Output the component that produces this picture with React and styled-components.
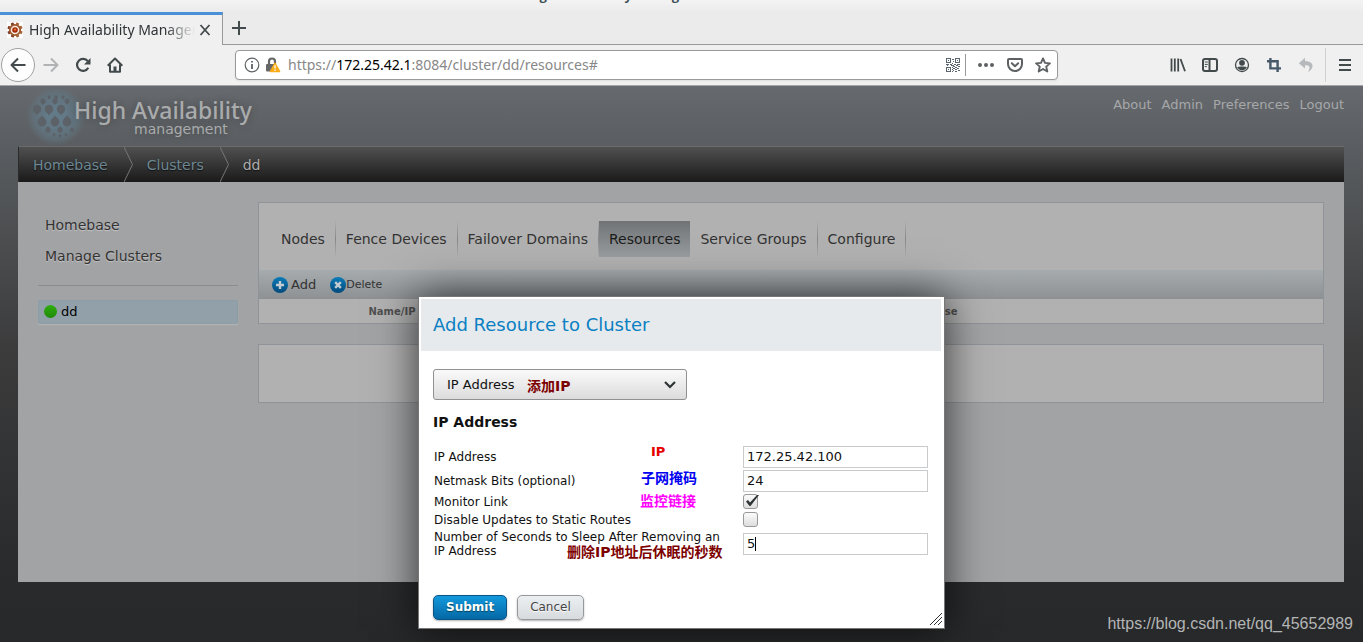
import React from "react";
import styled, { createGlobalStyle } from "styled-components";

const GlobalStyle = createGlobalStyle`
	* {
		box-sizing: border-box;
	}

	body {
		margin: 0;
		font-family: "DejaVu Sans", Verdana, "Noto Sans CJK SC", sans-serif;
		font-size: 13px;
		color: #111;
	}

	button, input, select {
		font-family: inherit;
		font-size: 13px;
	}

	a {
		color: inherit;
		text-decoration: none;
	}
`;

const Window = styled.div`
	min-height: 100vh;
	display: flex;
	flex-direction: column;
`;

/* browser */

const TitleBar = styled.div`
	height: 12px;
	padding: 0 10px 8px 0;
	display: flex;
	align-items: flex-end;
	justify-content: center;
	overflow: hidden;
	background: linear-gradient(#f3f3f3, #ebebeb);
	color: #3f5159;
	font: bold 13px/18px "Open Sans", sans-serif;
	white-space: nowrap;
`;

const TabStrip = styled.div`
	display: flex;
	height: 33px;
	background: #ebebeb;
`;

const BrowserTab = styled.div`
	display: flex;
	align-items: center;
	width: 223px;
	padding: 0 9px 0 7px;
	background: #f0f0f0;
	border-top: 3px solid #4a90d9;
	border-right: 1px solid #999;
	font: 14px/20px "Noto Sans", sans-serif;
	color: #2e3436;
`;

const TabTitle = styled.span`
	flex: 1;
	min-width: 0;
	margin: 0 2px 0 6px;
	overflow: hidden;
	white-space: nowrap;
	mask-image: linear-gradient(to right, #000 82%, transparent);
`;

const StripRest = styled.div`
	flex: 1;
	display: flex;
	align-items: center;
	padding-left: 8px;
	border-bottom: 1px solid #999;
`;

const IconButton = styled.button`
	display: flex;
	align-items: center;
	justify-content: center;
	width: 16px;
	height: 16px;
	padding: 0;
	border: 0;
	background: none;
	color: ${props => props.$faded ? "#b0b2b3" : "#434a4c"};
`;

const Toolbar = styled.div`
	display: flex;
	align-items: center;
	height: 41px;
	padding: 0 10px 0 1px;
	background: #f0f0f0;
	border-bottom: 1px solid #a5a5a5;
`;

const ToolGroup = styled.div`
	display: flex;
	align-items: center;
	gap: 16px;
`;

const MenuGroup = styled(ToolGroup)`
	gap: 11px;
	margin-left: 11px;
`;

const BackButton = styled(IconButton)`
	width: 34px;
	height: 34px;
	margin-right: -8px;
	border: 1px solid #a0a0a0;
	border-radius: 50%;
	background: #fdfdfd;
`;

const UrlBar = styled.div`
	flex: 1;
	display: flex;
	align-items: center;
	gap: 5px;
	height: 30px;
	margin: 0 112px;
	padding: 0 6px 0 8px;
	background: white;
	border: 1px solid #999;
	border-radius: 4px;
	box-shadow: 0 1px 2px rgba(0,0,0,0.08);
	color: #5d6163;
`;

const Url = styled.div`
	flex: 1;
	margin-left: 2px;
	color: #888;
	font: 14px/20px "Noto Sans", sans-serif;

	b {
		font-weight: normal;
		color: #000;
	}
`;

const Divider = styled.span`
	width: 1px;
	height: ${props => props.$height}px;
	background: ${props => props.$color};
`;

const UrlActions = styled.div`
	display: flex;
	align-items: center;
	gap: 12px;
	margin-left: 6px;
`;

/* page */

const Page = styled.div`
	position: relative;
	flex: 1;
	padding: 0 19px 60px 18px;
	background: linear-gradient(#66696d, #55585b 90px, #3c3c3d 260px, #2a2b2c 480px, #272829);
`;

const Header = styled.header`
	display: flex;
	justify-content: space-between;
	height: 60px;
`;

const Brand = styled.div`
	display: flex;
	margin-left: 5px;
`;

const BrandText = styled.div`
	display: flex;
	flex-direction: column;
	align-items: flex-end;
	padding-top: 11px;
	margin-left: -14px;
	color: #a9abac;
	text-shadow: 0 0 8px rgba(0,0,0,0.3);
`;

const BrandName = styled.span`
	font: 500 23px/26px "Noto Sans", sans-serif;
`;

const BrandSub = styled.span`
	margin-right: 24px;
	font-size: 14px;
	line-height: 12px;
`;

const UserNav = styled.nav`
	display: flex;
	gap: 10px;
	padding-top: 11px;
	line-height: 16px;
	color: #a6a8aa;
`;

const Breadcrumbs = styled.nav`
	display: flex;
	align-items: center;
	height: 36px;
	padding-left: 14px;
	background: linear-gradient(#505050, #1a1a1a);
	border-top: 1px solid #6a6b6c;
	border-left: 1px solid #2b2b2b;
	font-size: 14px;
	color: #6d8894;
	text-shadow: 0 1px 1px #111;

	svg {
		margin: 0 14px 0 16px;
	}
`;

const Current = styled.span`
	color: #adadad;
`;

const Main = styled.main`
	display: flex;
	gap: 20px;
	min-height: 400px;
	padding: 20px;
	background: #a2a3a5;
`;

const Sidebar = styled.aside`
	width: 200px;
	padding-top: 8px;
`;

const SideLink = styled.a`
	display: block;
	padding: 0 7px;
	font-size: 14px;
	line-height: 31px;
	color: #333;
	text-shadow: 0 1px 1px #c4c4c4;
`;

const SideRule = styled.hr`
	margin: 13px 0 0;
	border: 0;
	border-top: 1px solid #8b8c8e;
`;

const ClusterItem = styled.a`
	display: flex;
	align-items: center;
	gap: 4px;
	height: 24px;
	margin-top: 14px;
	padding: 0 5px 1px;
	border: 1px solid #8c9da7;
	border-radius: 2px;
	background: #92a0aa;
	box-shadow: 0 1px 1px #b5b5b5;
	color: #000;
`;

const StatusDot = styled.span`
	width: 13px;
	height: 13px;
	border-radius: 50%;
	background: linear-gradient(#2fae0f, #1f8a08);
`;

const Content = styled.div`
	flex: 1;
	display: flex;
	flex-direction: column;
	gap: 20px;
`;

const Panel = styled.section`
	min-height: 59px;
	background: #b1b1b1;
	border: 1px solid #909498;
`;

const Tabs = styled.nav`
	display: flex;
	padding: 18px 12px 13px;
`;

const Tab = styled.a`
	padding: 1px 10px 0;
	font-size: 14px;
	line-height: 35px;
	color: ${props => props.$active ? "#1c1c1c" : "#333"};
	background: ${props => props.$active ? "linear-gradient(#6f7375, #9a9d9f)" : "none"};
	border-right: ${props => props.$active ? 0 : 1}px solid;
	border-image: linear-gradient(transparent, #858789, transparent) 1;
`;

const Actions = styled.div`
	display: flex;
	align-items: center;
	gap: 14px;
	height: 29px;
	padding-left: 13px;
	background: linear-gradient(#a6abae, #8d9194);
`;

const Action = styled.button`
	display: flex;
	align-items: center;
	gap: ${props => props.$compact ? 0 : 3}px;
	padding: 0;
	border: 0;
	background: none;
	font-size: ${props => props.$compact ? 11 : 13}px;
	color: #333;
`;

const ResourceTable = styled.table`
	width: 100%;
	table-layout: fixed;
	border-collapse: collapse;

	th {
		height: 24px;
		padding: 0;
		font-size: 10px;
		color: #505050;
	}
`;

/* dialog */

const DialogLayer = styled.div`
	position: absolute;
	top: 210px;
	left: 0;
	right: 0;
	display: flex;
	justify-content: center;
`;

const Dialog = styled.form`
	position: relative;
	width: 527px;
	padding: 2px 3px 8px 2px;
	background: white;
	border: 1px solid #777;
	box-shadow: 0 0 40px rgba(0,0,0,0.7);
`;

const DialogTitle = styled.h2`
	margin: 0;
	padding: 0 12px;
	background: #e6eaed;
	color: #0a80c2;
	font-size: 18px;
	font-weight: normal;
	line-height: 52px;
`;

const DialogBody = styled.div`
	padding: 18px 12px 0;
`;

const SelectBox = styled.div`
	position: relative;
	width: 254px;

	svg {
		position: absolute;
		top: 10px;
		right: 11px;
		pointer-events: none;
	}
`;

const Select = styled.select`
	appearance: none;
	display: block;
	width: 100%;
	height: 31px;
	padding: 0 13px;
	border: 1px solid #8f9192;
	border-radius: 3px;
	background: linear-gradient(#fafafa, #dcdcdc);
	color: #111;
`;

const Note = styled.span`
	position: absolute;
	left: ${props => props.$left}px;
	top: ${props => props.$top}px;
	color: ${props => props.$color};
	font-weight: bold;
	font-size: ${props => props.$small ? 13 : 14}px;
	line-height: 18px;
	white-space: nowrap;
	pointer-events: none;
`;

const FormTitle = styled.h3`
	margin: 13px 0 14px;
	font-size: 14px;
	line-height: 18px;
`;

const Row = styled.div`
	position: relative;
	display: grid;
	grid-template-columns: 1fr 185px;
	align-items: center;
	column-gap: 12px;
	min-height: ${props => props.$height}px;
	padding-right: 1px;
`;

const Label = styled.label`
	padding-left: 1px;
	font-size: 12px;
	line-height: 14px;
`;

const Field = styled.div`
	position: relative;
	display: flex;
`;

const TextInput = styled.input`
	width: 100%;
	height: 22px;
	padding: 0 3px 1px;
	border: 1px solid #c8cacc;
	background: white;
	color: #111;
	outline: 0;
`;

const Caret = styled.span`
	position: absolute;
	left: 12px;
	top: 4px;
	width: 1px;
	height: 14px;
	background: #000;
`;

const CheckBox = styled.input`
	appearance: none;
	width: 15px;
	height: 15px;
	margin: 0 0 1px;
	border: 1px solid #999;
	border-radius: 3px;
	background: linear-gradient(#fbfbfb, #dedede);

	& + svg {
		display: none;
		position: absolute;
		left: 0;
		top: 0;
		pointer-events: none;
	}

	&:checked + svg {
		display: block;
	}
`;

const Buttons = styled.div`
	display: flex;
	gap: 10px;
	margin-top: 36px;
`;

const Button = styled.button`
	height: 25px;
	padding: 0 12px 2px;
	border: 1px solid ${props => props.$primary ? "#0a5486" : "#96999b"};
	border-radius: 5px;
	background: ${props => props.$primary
		? "linear-gradient(#1299dc, #0568a6)"
		: "linear-gradient(#eceff1, #d8dbde)"};
	box-shadow: 0 1px 2px rgba(0,0,0,0.3);
	color: ${props => props.$primary ? "white" : "#444"};
	font-size: 12px;
	font-weight: ${props => props.$primary ? "bold" : "normal"};
	text-shadow: 0 1px 1px ${props => props.$primary ? "#045" : "white"};
`;

const Grip = styled.svg`
	position: absolute;
	right: 2px;
	bottom: 3px;
`;

const Watermark = styled.span`
	position: absolute;
	right: 10px;
	bottom: 8px;
	color: #b4b5b6;
	font: 16px/20px "Liberation Sans", Arial, sans-serif;
`;

/* icons */

const Icon = ({ width = 2, children }) => (
	<svg width="16" height="16" viewBox="0 0 16 16" fill="none"
		stroke="currentColor" strokeWidth={width} strokeLinejoin="round">
		{children}
	</svg>
);

const teeth = [0, 45, 90, 135, 180, 225, 270, 315];

const Favicon = () => (
	<svg width="16" height="16" viewBox="0 0 16 16">
		<rect width="16" height="16" fill="#fff" />
		{teeth.map(angle => (
			<rect key={angle} x="6.5" y="0.3" width="3" height="3" rx="0.6"
				fill={angle < 180 ? "#a8683a" : "#7e3d28"} transform={`rotate(${angle + 22} 8 8)`} />
		))}
		<circle cx="8" cy="8" r="5.2" fill="#f7e9dd" stroke="#a05c30" strokeWidth="1.8" />
		<circle cx="8" cy="8" r="2.8" fill="#a5280c" />
		<circle cx="8" cy="7.6" r="1.2" fill="#e8722c" />
	</svg>
);

const InfoIcon = () => (
	<Icon width={1.2}>
		<circle cx="8" cy="8" r="6.8" />
		<path d="M8 7v5M8 4v1.6" strokeWidth="1.8" />
	</Icon>
);

const LockIcon = () => (
	<svg width="16" height="16" viewBox="0 0 16 16">
		<path d="M4 8V4.5a3 3 0 0 1 6 0V7" fill="none" stroke="#666" strokeWidth="2.2" />
		<rect x="1" y="7" width="10" height="7.5" rx="1" fill="#666" />
		<path d="M10 6.5 14.5 14.5H5.5Z" fill="#fbac18" stroke="#fbac18" strokeWidth="1.6" strokeLinejoin="round" />
		<path d="M10 8.2v3.4M10 12.6v1.4" stroke="#fff" strokeWidth="1.3" />
	</svg>
);

const QrIcon = () => (
	<svg width="14" height="14" viewBox="0 0 14 14" fill="none" stroke="#5c6670" shapeRendering="crispEdges">
		<path d="M.5.5h4v4h-4zM9.5.5h4v4h-4zM.5 9.5h4v4h-4z" />
		<path d="M2 2.5h1M11 2.5h1M2 11.5h1M6 1.5h2M7 3.5h1M6 5.5h1M0 6.5h3M4 6.5h2M8 6.5h2M11 6.5h3M1 7.5h1M5 7.5h3M10 7.5h2M7 8.5h2M12 8.5h2M6 9.5h1M9 9.5h2M7 10.5h2M11 10.5h2M6 11.5h1M9 11.5h2M7 12.5h1M12 12.5h2M6 13.5h1M9 13.5h2" />
	</svg>
);

const DotsIcon = () => (
	<svg width="18" height="16" viewBox="0 0 18 16" fill="#5d6163">
		<circle cx="3" cy="8" r="2" />
		<circle cx="9" cy="8" r="2" />
		<circle cx="15" cy="8" r="2" />
	</svg>
);

const PocketIcon = () => (
	<Icon>
		<path d="M2 2h12a1 1 0 0 1 1 1v4a7 7 0 0 1-14 0V3a1 1 0 0 1 1-1Z" />
		<path d="m4.8 6.3 3.2 3 3.2-3" strokeLinecap="round" />
	</Icon>
);

const StarIcon = () => (
	<Icon width={1.9}>
		<path d="m8 1.4 2 4.5 4.9.5-3.7 3.2 1.1 4.9L8 12l-4.3 2.5 1.1-4.9L1.1 6.4 6 5.9Z" />
	</Icon>
);

const LibraryIcon = () => (
	<Icon width={1.8}>
		<path d="M1.5 1.5v13M4.8 1.5v13M8.2 1.5v13M10.5 2 15 14.3" />
	</Icon>
);

const SidebarIcon = () => (
	<Icon>
		<rect x="1" y="2" width="14" height="12" rx="2" />
		<path d="M7.5 2v12" />
		<path d="M2.8 5h3M2.8 7.4h3M2.8 9.6h2" strokeWidth="1" />
	</Icon>
);

const AccountIcon = () => (
	<Icon width={1.3}>
		<circle cx="8" cy="8" r="6.5" />
		<circle cx="8" cy="5.8" r="2.9" fill="currentColor" stroke="none" />
		<path d="M3.2 10.2c2-.8 7.6-.8 9.6 0A5.4 5.4 0 0 1 3.2 10.2Z" fill="currentColor" stroke="none" />
	</Icon>
);

const CropIcon = () => (
	<Icon width={2.4}>
		<path d="M1 4.2h10.6V15M4.4 1v10.4H15" stroke="#46586a" strokeLinejoin="miter" />
	</Icon>
);

const UndoIcon = () => (
	<svg width="16" height="16" viewBox="0 0 16 16" fill="#b6babd">
		<path d="M7 .8.8 6.2 7 11.5V8.4c4.5-.4 5.8 1.6 3 6.8C16.5 11.8 16.5 4.2 7 4Z" />
	</svg>
);

// x, y, radius and the side the point of the drop is on
const drops = [
	[26, 11, 1.5, 1], [33, 11, 1.8, 1], [40, 11, 1.5, 1],
	[20, 15, 2.6, 1], [32, 15, 2.6, 1], [44, 15, 2.4, 1],
	[14, 23, 4.2, 1], [26, 23, 4.2, 1], [38, 23, 4.2, 1],
	[19, 36, 4.4, -1], [32, 36, 4.4, -1], [44, 36, 4.4, -1],
	[25, 44, 2.6, -1], [37, 44, 2.6, -1], [49, 44, 2, -1],
	[31, 49, 1.5, -1], [37, 50, 1.5, -1], [43, 49, 1.3, -1],
];

const Drop = ({ x, y, r, dir }) => (
	<g>
		<circle cx={x} cy={y} r={r} />
		<path d={`M${x - r * 0.85} ${y + dir * r * 0.5}L${x} ${y + dir * r * 1.5}L${x + r * 0.85} ${y + dir * r * 0.5}Z`} />
	</g>
);

const Logo = () => (
	<svg width="65" height="60" viewBox="0 0 65 60">
		<defs>
			<radialGradient id="glow">
				<stop offset="0.3" stopColor="#637a88" />
				<stop offset="0.7" stopColor="#617783" stopOpacity="0.7" />
				<stop offset="1" stopColor="#617783" stopOpacity="0" />
			</radialGradient>
		</defs>
		<circle cx="33" cy="30" r="30" fill="url(#glow)" />
		<g fill="#5c6267">
			{drops.map(([x, y, r, dir]) => (
				<Drop key={`${x}-${y}`} x={x} y={y} r={r} dir={dir} />
			))}
		</g>
	</svg>
);

const CrumbArrow = () => (
	<svg width="9" height="35" viewBox="0 0 9 35" fill="none">
		<path d="M0 0 8.5 17.5 0 35" stroke="#777" />
	</svg>
);

const RoundIcon = ({ turn = 0 }) => (
	<svg width="16" height="16" viewBox="0 0 16 16">
		<defs>
			<linearGradient id="ball" x2="0" y2="1">
				<stop stopColor="#0b7cb8" />
				<stop offset="1" stopColor="#034a7c" />
			</linearGradient>
		</defs>
		<circle cx="8" cy="8" r="8" fill="url(#ball)" />
		<path d="M8 4v8M4 8h8" stroke="#c3ccd2" strokeWidth="2.4" transform={`rotate(${turn} 8 8)`} />
	</svg>
);

const Browser = () => (
	<>
		<TitleBar>High Availability Management - Mozilla Firefox</TitleBar>
		<TabStrip>
			<BrowserTab>
				<Favicon />
				<TabTitle>High Availability Management</TabTitle>
				<IconButton aria-label="Close tab">
					<Icon width={1.8}><path d="m3.5 3 9 10m0-10-9 10" /></Icon>
				</IconButton>
			</BrowserTab>
			<StripRest>
				<IconButton aria-label="New tab">
					<Icon><path d="M8 1v14M1 8h14" /></Icon>
				</IconButton>
			</StripRest>
		</TabStrip>
		<Toolbar>
			<ToolGroup>
				<BackButton aria-label="Back">
					<Icon><path d="M15.5 8H1.5M8 1.5 1.5 8 8 14.5" /></Icon>
				</BackButton>
				<IconButton aria-label="Forward" $faded>
					<Icon><path d="M.5 8h14M8 1.5 14.5 8 8 14.5" /></Icon>
				</IconButton>
				<IconButton aria-label="Reload">
					<Icon width={2.2}>
						<path d="M12.8 4.2A6 6 0 1 0 13.3 10.8" />
						<path d="M15.5 1v6.5H9Z" fill="currentColor" stroke="none" />
					</Icon>
				</IconButton>
				<IconButton aria-label="Home">
					<Icon>
						<path d="M.7 8.7 8 1.5l7.3 7.2M3 7.5v7.3h10V7.5" />
						<path d="M8 14.5v-5" strokeWidth="3" />
					</Icon>
				</IconButton>
			</ToolGroup>
			<UrlBar>
				<InfoIcon />
				<LockIcon />
				<Url>https://<b>172.25.42.1</b>:8084/cluster/dd/resources#</Url>
				<QrIcon />
				<Divider $height={22} $color="#999" />
				<UrlActions>
					<DotsIcon />
					<PocketIcon />
					<StarIcon />
				</UrlActions>
			</UrlBar>
			<ToolGroup>
				<IconButton aria-label="Library"><LibraryIcon /></IconButton>
				<IconButton aria-label="Sidebars"><SidebarIcon /></IconButton>
				<IconButton aria-label="Account"><AccountIcon /></IconButton>
				<IconButton aria-label="Screenshot"><CropIcon /></IconButton>
				<IconButton aria-label="Undo"><UndoIcon /></IconButton>
			</ToolGroup>
			<MenuGroup>
				<Divider $height={34} $color="#d0d0d0" />
				<IconButton aria-label="Menu">
					<Icon><path d="M2 3h12M2 8h12M2 13h12" /></Icon>
				</IconButton>
			</MenuGroup>
		</Toolbar>
	</>
);

const AddResource = () => (
	<DialogLayer>
		<Dialog onSubmit={e => e.preventDefault()}>
			<DialogTitle>Add Resource to Cluster</DialogTitle>
			<DialogBody>
				<SelectBox>
					<Select aria-label="Resource type">
						<option>IP Address</option>
					</Select>
					<Note $left={94} $top={8} $color="#7d0000">添加IP</Note>
					<svg width="12" height="12" viewBox="0 0 12 12" fill="none" stroke="#2e3436" strokeWidth="2.2">
						<path d="m1 3 5 5 5-5" />
					</svg>
				</SelectBox>
				<FormTitle>IP Address</FormTitle>
				<Row $height={24}>
					<Label htmlFor="ip">IP Address</Label>
					<Field><TextInput id="ip" defaultValue="172.25.42.100" /></Field>
					<Note $left={218} $top={-2} $color="#e60000" $small>IP</Note>
				</Row>
				<Row $height={24}>
					<Label htmlFor="netmask">Netmask Bits (optional)</Label>
					<Field><TextInput id="netmask" defaultValue="24" /></Field>
					<Note $left={208} $top={0} $color="#0000f0">子网掩码</Note>
				</Row>
				<Row $height={18}>
					<Label htmlFor="monitor">Monitor Link</Label>
					<Field>
						<CheckBox id="monitor" type="checkbox" defaultChecked />
						<svg width="16" height="15" viewBox="0 0 16 15" fill="#2e3436">
							<path d="m3 7.5 2-1.5 2 2.5L14 1h2L7.5 12h-1Z" />
						</svg>
					</Field>
					<Note $left={207} $top={-1} $color="#f0f">监控链接</Note>
				</Row>
				<Row $height={18}>
					<Label htmlFor="routes">Disable Updates to Static Routes</Label>
					<Field><CheckBox id="routes" type="checkbox" /></Field>
				</Row>
				<Row $height={30}>
					<Label htmlFor="sleep">Number of Seconds to Sleep After Removing an IP Address</Label>
					<Field>
						<TextInput id="sleep" defaultValue="5" />
						<Caret />
					</Field>
					<Note $left={134} $top={14} $color="#7d0000">删除IP地址后休眠的秒数</Note>
				</Row>
				<Buttons>
					<Button type="submit" $primary>Submit</Button>
					<Button type="button">Cancel</Button>
				</Buttons>
			</DialogBody>
			<Grip width="12" height="12" viewBox="0 0 12 12" stroke="#333">
				<path d="M0 12 12 0M4 12l8-8M8 12l4-4" />
			</Grip>
		</Dialog>
	</DialogLayer>
);

const App = () => (
	<Window>
		<GlobalStyle />
		<Browser />
		<Page>
			<Header>
				<Brand>
					<Logo />
					<BrandText>
						<BrandName>High Availability</BrandName>
						<BrandSub>management</BrandSub>
					</BrandText>
				</Brand>
				<UserNav>
					<a href="#about">About</a>
					<a href="#admin">Admin</a>
					<a href="#preferences">Preferences</a>
					<a href="#logout">Logout</a>
				</UserNav>
			</Header>
			<Breadcrumbs>
				<a href="#homebase">Homebase</a>
				<CrumbArrow />
				<a href="#clusters">Clusters</a>
				<CrumbArrow />
				<Current>dd</Current>
			</Breadcrumbs>
			<Main>
				<Sidebar>
					<SideLink href="#homebase">Homebase</SideLink>
					<SideLink href="#clusters">Manage Clusters</SideLink>
					<SideRule />
					<ClusterItem href="#dd"><StatusDot />dd</ClusterItem>
				</Sidebar>
				<Content>
					<Panel>
						<Tabs>
							<Tab href="#nodes">Nodes</Tab>
							<Tab href="#fence">Fence Devices</Tab>
							<Tab href="#failover">Failover Domains</Tab>
							<Tab href="#resources" $active>Resources</Tab>
							<Tab href="#services">Service Groups</Tab>
							<Tab href="#configure">Configure</Tab>
						</Tabs>
						<Actions>
							<Action><RoundIcon />Add</Action>
							<Action $compact><RoundIcon turn={45} />Delete</Action>
						</Actions>
						<ResourceTable>
							<colgroup>
								<col width="25%" />
								<col width="27%" />
								<col width="24%" />
								<col />
							</colgroup>
							<thead>
								<tr>
									<th>Name/IP</th>
									<th>Type</th>
									<th>In Use</th>
									<th />
								</tr>
							</thead>
						</ResourceTable>
					</Panel>
					<Panel />
				</Content>
			</Main>
			<AddResource />
			<Watermark>https://blog.csdn.net/qq_45652989</Watermark>
		</Page>
	</Window>
);

export default App;
